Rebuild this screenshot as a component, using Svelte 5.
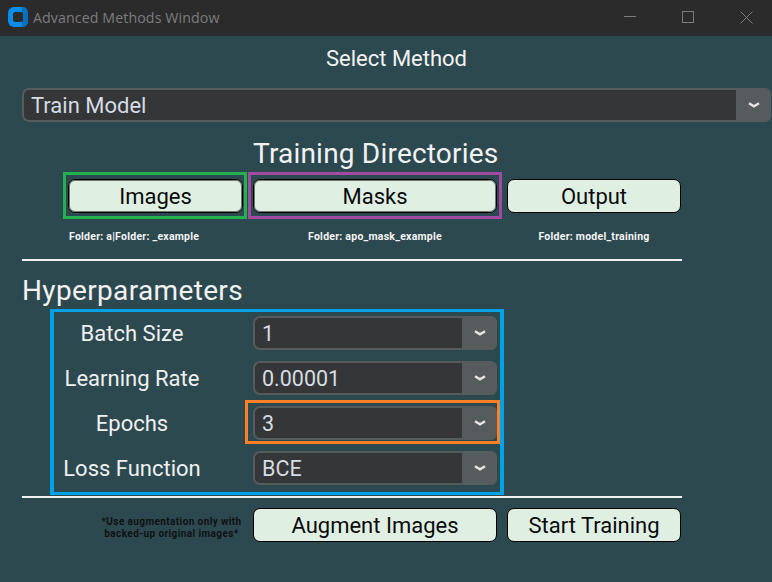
<script>
  const folders = [
    { text: 'Folder: a|Folder: _example', cls: 'c1' },
    { text: 'Folder: apo_mask_example', cls: 'c2' },
    { text: 'Folder: model_training', cls: 'c3' }
  ];
  const params = [
    { label: 'Batch Size', value: '1' },
    { label: 'Learning Rate', value: '0.00001' },
    { label: 'Epochs', value: '3', mark: true },
    { label: 'Loss Function', value: 'BCE' }
  ];
</script>

{#snippet chevron()}
  <svg class="chev" width="12" height="6" viewBox="0 0 12 6" aria-hidden="true">
    <path d="M1 1.2 L6 4.3 L11 1.2" fill="none" stroke="#e6e6e6" stroke-width="2.4" />
  </svg>
{/snippet}

<div class="window">
  <header class="titlebar">
    <svg class="logo" width="20" height="20" viewBox="0 0 20 20" aria-hidden="true">
      <rect width="20" height="20" rx="6" fill="#0a8de8" />
      <path d="M15 0a5.5 5.5 0 0 1 5 5.5v9a5.5 5.5 0 0 1-5 5.5h-1V0z" fill="#0670bd" />
      <rect x="5" y="5" width="10" height="10" rx="2.5" fill="#2b2b2b" />
    </svg>
    <span class="wintitle">Advanced Methods Window</span>
    <div class="controls">
      <svg width="12" height="12" viewBox="0 0 12 12"><path d="M0 5.5H12" stroke="#7c7c7c" /></svg>
      <svg width="12" height="12" viewBox="0 0 12 12"><rect x=".5" y=".5" width="11" height="11" fill="none" stroke="#7c7c7c" /></svg>
      <svg width="13" height="13" viewBox="0 0 13 13"><path d="M.5 .5L12.5 12.5M12.5 .5L.5 12.5" stroke="#7c7c7c" /></svg>
    </div>
  </header>

  <main class="content">
    <h1 class="method-title">Select Method</h1>
    <div class="combo wide">
      <span class="combo-value big">Train Model</span>
      <span class="combo-arrow">{@render chevron()}</span>
    </div>

    <h2 class="dir-title">Training Directories</h2>
    <div class="triple">
      <div class="slot">
        <button class="btn focused">Images</button>
        <span class="mark green"></span>
      </div>
      <div class="slot">
        <button class="btn focused">Masks</button>
        <span class="mark purple"></span>
      </div>
      <div class="slot">
        <button class="btn">Output</button>
      </div>
    </div>
    <div class="triple folders">
      {#each folders as f}
        <div class="folder {f.cls}">{f.text}</div>
      {/each}
    </div>
    <hr class="rule first" />

    <h2 class="hyper-title">Hyperparameters</h2>
    <section class="params">
      <span class="mark blue"></span>
      {#each params as p}
        <div class="param">
          <div class="param-label">{p.label}</div>
          <div class="combo small">
            <span class="combo-value">{p.value}</span>
            <span class="combo-arrow">{@render chevron()}</span>
            {#if p.mark}<span class="mark orange"></span>{/if}
          </div>
        </div>
      {/each}
    </section>
    <hr class="rule second" />

    <div class="triple actions">
      <div class="note">*Use augmentation only with<br />backed-up original images*</div>
      <div class="slot"><button class="btn">Augment Images</button></div>
      <div class="slot"><button class="btn">Start Training</button></div>
    </div>
  </main>
</div>

<style>
  :global(body) {
    margin: 0;
    background: #2d4950;
  }
  .window {
    width: 772px;
    height: 582px;
    overflow: hidden;
    background: #2d4950;
    font-family: Roboto, "Liberation Sans", sans-serif;
  }
  .titlebar {
    height: 36px;
    background: #2b2b2b;
    display: flex;
    align-items: center;
    padding: 0 0 2px 8px;
    box-sizing: border-box;
  }
  .logo { margin-right: 5px; }
  .wintitle {
    color: #7d7d7d;
    font-size: 14.2px;
    font-family: "Open Sans", Roboto, sans-serif;
    letter-spacing: 0.1px;
  }
  .controls {
    margin-left: auto;
    display: flex;
    align-items: center;
    gap: 46px;
    padding-right: 19px;
  }
  .content { padding: 0 1px 0 22px; }
  .method-title {
    margin: 0 -1px 0 -1px;
    height: 52px;
    line-height: 46px;
    text-align: center;
    color: #f2f2f2;
    font-size: 22px;
    font-weight: 400;
  }
  .combo {
    display: flex;
    position: relative;
    box-sizing: border-box;
    height: 34px;
    border: 2px solid #565b5e;
    border-radius: 7px;
    background: #343638;
    color: #dce4ee;
  }
  .combo.wide { width: 749px; }
  .combo.small { width: 244px; margin-left: 11px; }
  .combo-value {
    flex: 1;
    padding-left: 7px;
    font-size: 21.5px;
    line-height: 32px;
    color: #d6dce2;
  }
  .combo-value.big { font-size: 22px; }
  .combo-arrow {
    width: 35px;
    margin: -2px;
    background: #565b5e;
    border-radius: 0 6px 6px 0;
    display: flex;
    align-items: center;
    justify-content: center;
  }
  .chev { display: block; }
  .dir-title {
    margin: 0;
    height: 57px;
    line-height: 64px;
    padding-left: 231px;
    width: 244px;
    text-align: center;
    color: #f2f2f2;
    font-size: 28px;
    font-weight: 400;
    letter-spacing: 0.2px;
    white-space: nowrap;
  }
  .triple {
    display: grid;
    grid-template-columns: 175px 244px 174px;
    column-gap: 10px;
    margin-left: 46px;
  }
  .slot { position: relative; }
  .btn {
    display: block;
    width: 100%;
    height: 34px;
    box-sizing: border-box;
    padding: 0;
    border: 1px solid #000;
    border-radius: 7px;
    background: #dff0e3;
    color: #0a0a0a;
    font-family: inherit;
    font-size: 22px;
  }
  .btn.focused { box-shadow: inset 0 0 0 1px rgba(0, 0, 0, 0.5); }
  .mark {
    position: absolute;
    border: 3px solid;
    box-sizing: border-box;
    pointer-events: none;
  }
  .green { border-color: #22b14c; left: -5px; right: -4px; top: -7px; bottom: -6px; }
  .purple { border-color: #a349a4; left: -5px; right: -5px; top: -7px; bottom: -6px; }
  .blue { border-color: #00a2e8; border-width: 3px 4px 3px; left: 28px; top: 0; width: 454px; height: 186px; }
  .orange { border-color: #ff7f27; left: -10px; right: -5px; top: -8px; bottom: -6px; }
  .folders {
    margin-top: 16px;
    height: 14px;
    align-items: center;
  }
  .folder {
    text-align: center;
    color: #f4f4f4;
    font-size: 10.5px;
    font-weight: 700;
    white-space: nowrap;
    letter-spacing: 0.25px;
  }
  .c1 { text-align: left; padding-left: 1px; }
  .rule {
    margin: 0;
    border: 0;
    height: 2px;
    width: 660px;
    background: #f0f0f0;
  }
  .first { margin-top: 16px; }
  .hyper-title {
    margin: 0;
    height: 48px;
    line-height: 60px;
    color: #f2f2f2;
    font-size: 28px;
    font-weight: 400;
    letter-spacing: 0.35px;
  }
  .params {
    position: relative;
    height: 187px;
    padding-top: 7px;
    box-sizing: border-box;
  }
  .param {
    display: grid;
    grid-template-columns: 220px 255px;
    align-items: center;
    height: 34px;
    margin-bottom: 11px;
  }
  .param-label {
    text-align: center;
    color: #f0f0f0;
    font-size: 22px;
  }
  .actions { margin-top: 10px; margin-left: 0; grid-template-columns: 221px 244px 174px; }
  .note {
    color: #0d1113;
    text-align: center;
    font-size: 10px;
    font-weight: 700;
    line-height: 12px;
    letter-spacing: 0.4px;
    padding: 8px 1px 0 79px;
    white-space: nowrap;
  }
</style>
